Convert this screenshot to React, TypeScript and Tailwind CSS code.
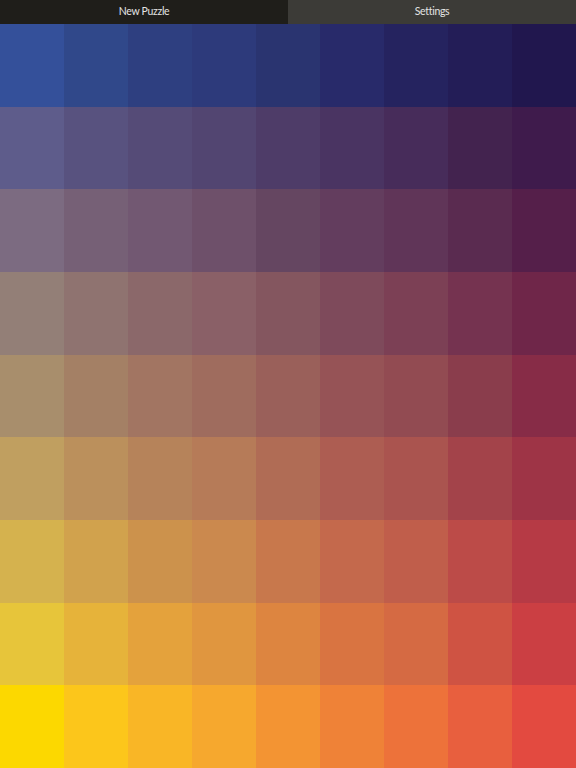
import React from "react";

const grid: string[][] = [
  ["#34509a", "#30488a", "#2e3f80", "#2d3a7b", "#2a3470", "#282a6a", "#25235f", "#231d57", "#21174e"],
  ["#5e5c8b", "#58527f", "#554b77", "#524571", "#4e3c68", "#4a3462", "#472c5a", "#43234f", "#3f1b4c"],
  ["#7c6b81", "#766076", "#725872", "#6e506a", "#654661", "#633d5e", "#603558", "#5a2b50", "#551f4a"],
  ["#937f77", "#8f7370", "#8b686a", "#8a6067", "#84565f", "#7e4a5b", "#7c4055", "#753350", "#6f2649"],
  ["#a88e6c", "#a48065", "#a27562", "#9f6c5e", "#9a605a", "#965356", "#924b52", "#8a3d4c", "#872c47"],
  ["#c09f60", "#bb905c", "#b6835a", "#b67b58", "#b06c55", "#ad5d52", "#aa544f", "#a3434a", "#9e3446"],
  ["#d5b24e", "#d1a24d", "#cc924c", "#cb894e", "#c8784c", "#c4694c", "#c05e4b", "#bc4b48", "#b63a45"],
  ["#e7c53a", "#e6b33a", "#e4a23c", "#e0963f", "#dd8540", "#d97441", "#d56a43", "#cf5343", "#cb3f43"],
  ["#fcd800", "#fcc61b", "#f9b626", "#f6a82e", "#f39433", "#ef8237", "#ed723a", "#e85f3e", "#e34a40"],
];

export default function App() {
  return (
    <div className="w-[576px] h-[768px] flex flex-col overflow-hidden" style={{ fontFamily: "Lato, 'Open Sans', sans-serif" }}>
      <div className="h-[24px] flex shrink-0">
        <div className="flex-1 bg-[#1f1e1a] text-[#e4e4e4] text-[10.5px] tracking-[-0.3px] flex items-center justify-center">New Puzzle</div>
        <div className="flex-1 bg-[#3c3b37] text-[#e4e4e4] text-[10.5px] tracking-[-0.3px] flex items-center justify-center">Settings</div>
      </div>
      <div className="flex-1 grid grid-cols-9 grid-rows-9">
        {grid.flatMap((row, r) =>
          row.map((c, i) => <div key={`${r}-${i}`} style={{ backgroundColor: c }} />)
        )}
      </div>
    </div>
  );
}
